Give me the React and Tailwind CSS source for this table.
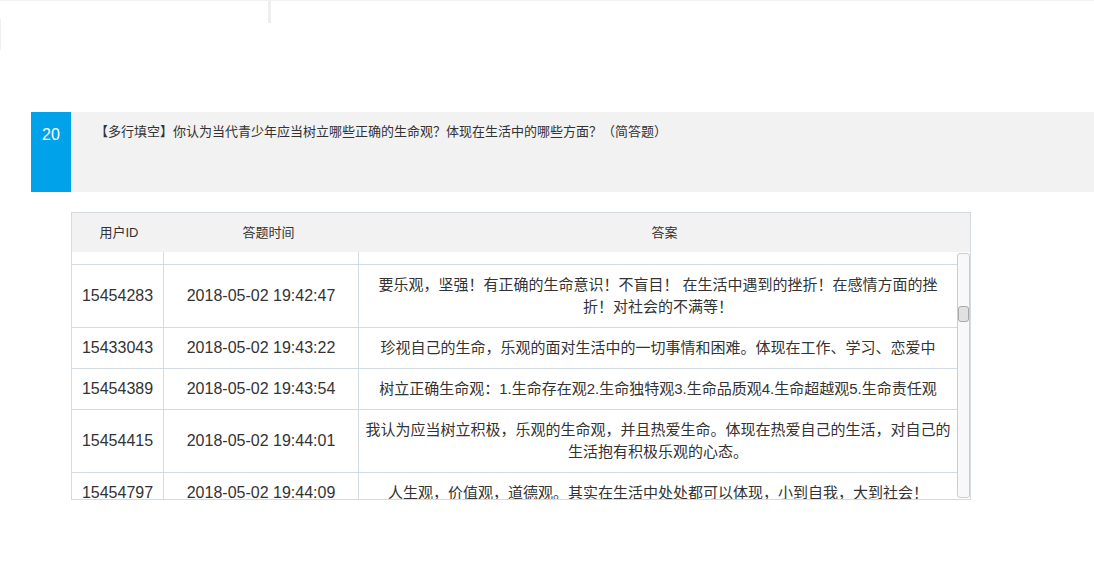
import React from "react";

const rows = [
  {
    id: "15454283",
    time: "2018-05-02 19:42:47",
    answer: ["要乐观，坚强！有正确的生命意识！不盲目！ 在生活中遇到的挫折！在感情方面的挫", "折！对社会的不满等！"],
  },
  {
    id: "15433043",
    time: "2018-05-02 19:43:22",
    answer: ["珍视自己的生命，乐观的面对生活中的一切事情和困难。体现在工作、学习、恋爱中"],
  },
  {
    id: "15454389",
    time: "2018-05-02 19:43:54",
    answer: ["树立正确生命观：1.生命存在观2.生命独特观3.生命品质观4.生命超越观5.生命责任观"],
  },
  {
    id: "15454415",
    time: "2018-05-02 19:44:01",
    answer: ["我认为应当树立积极，乐观的生命观，并且热爱生命。体现在热爱自己的生活，对自己的", "生活抱有积极乐观的心态。"],
  },
  {
    id: "15454797",
    time: "2018-05-02 19:44:09",
    answer: ["人生观，价值观，道德观。其实在生活中处处都可以体现，小到自我，大到社会！"],
  },
];

function App() {
  return (
    <div
      className="w-[1094px] h-[566px] bg-white overflow-hidden text-[#333]"
      style={{ fontFamily: '"Liberation Sans", "Noto Sans CJK SC", sans-serif' }}
    >
      {/* 顶部残留的边框 */}
      <div className="border-t border-[#f2f2f2] flex">
        <div className="w-[268px] h-[22px]" />
        <div className="w-[3px] h-[22px] bg-[#efefef]" />
      </div>
      <div className="-mt-[4px] w-[1px] h-[31px] bg-[#efefef]" />

      {/* 题目 */}
      <div className="mt-[62px] ml-[31px] flex h-[80px] bg-[#f2f2f2]">
        <div className="w-[40px] bg-[#00a3ea] text-white text-[16px] leading-[20px] pt-[13px] text-center">
          20
        </div>
        <div className="pl-[24px] pt-[11px] text-[13px] leading-[18px] text-[#333]">
          【多行填空】你认为当代青少年应当树立哪些正确的生命观？体现在生活中的哪些方面？（简答题）
        </div>
      </div>

      {/* 答案表格 */}
      <div className="mt-[20px] ml-[71px] w-[900px] border border-[#d3dbe2] border-b-0">
        <div className="grid grid-cols-[92px_195px_1fr] h-[39px] bg-[#f2f2f2] text-[13px] items-center text-center">
          <div className="pl-[2px]">用户ID</div>
          <div className="pl-[14px]">答题时间</div>
          <div>答案</div>
        </div>
        <div className="flex h-[247px] overflow-hidden">
          <div className="w-[885px] text-[15px] leading-[22px]">
            <div className="grid grid-cols-[92px_195px_598px] h-[13px] border-b border-[#d3dbe2]">
              <div className="border-r border-[#d3dbe2]" />
              <div className="border-r border-[#d3dbe2]" />
              <div />
            </div>
            {rows.map((r) => (
              <div
                key={r.id}
                className="grid grid-cols-[92px_195px_598px] border-b border-[#d3dbe2] text-center"
              >
                <div className="border-r border-[#d3dbe2] flex items-center justify-center py-[9px] text-[16px]">
                  {r.id}
                </div>
                <div className="border-r border-[#d3dbe2] flex items-center justify-center py-[9px] text-[16px]">
                  {r.time}
                </div>
                <div className="py-[9px] px-[4px]">
                  {r.answer.map((line, i) => (
                    <div key={i} className="whitespace-nowrap">
                      {line}
                    </div>
                  ))}
                </div>
              </div>
            ))}
          </div>
          <div className="w-[13px] pt-[1px] pb-[1px]">
            <div className="h-full rounded-[3px] border border-[#cdcdcd] bg-[#f8f8f8] pt-[52px]">
              <div className="h-[16px] rounded-[3px] border border-[#a9a9a9] bg-[#e1e1e1]" />
            </div>
          </div>
        </div>
        <div className="h-0 border-b border-[#d3dbe2]" />
      </div>
    </div>
  );
}

export default App;
